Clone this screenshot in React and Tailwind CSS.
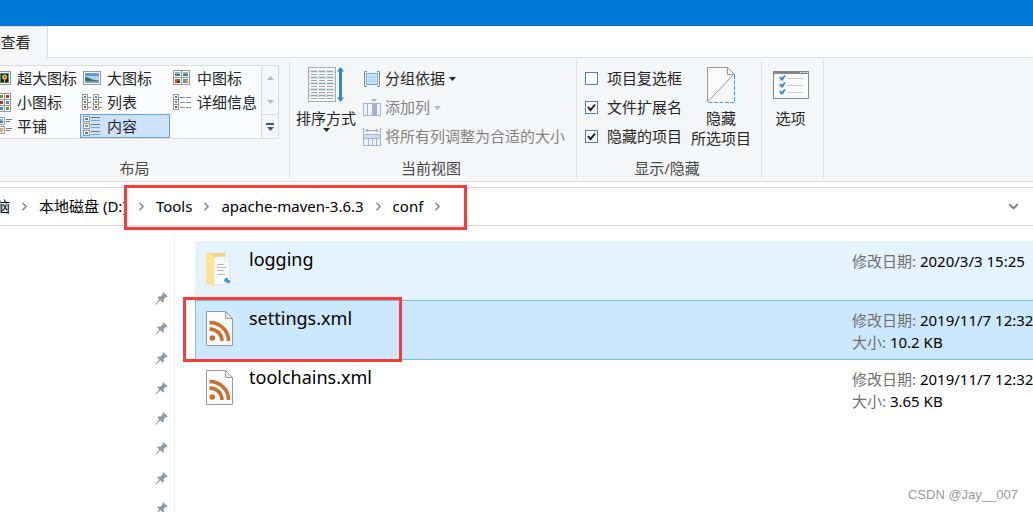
import { useState } from 'react';
import { ChevronDown, ChevronRight } from 'lucide-react';

function ExtraLargeIcon() {
  return (
    <svg width="20" height="20" viewBox="0 0 20 20">
      <rect x="3.5" y="3.5" width="15" height="13" fill="#fff" stroke="#969696" />
      <rect x="5" y="5" width="12" height="10" fill="#2f8fd0" />
      <rect x="5" y="11" width="12" height="4" fill="#3c8a4a" />
      <rect x="9" y="6" width="7" height="8" fill="#2b2416" />
      <circle cx="12.5" cy="9" r="2.5" fill="#f4c51c" />
      <circle cx="12.5" cy="9" r="1" fill="#b03a10" />
      <rect x="12" y="11" width="1" height="3" fill="#f4c51c" />
    </svg>
  );
}

function LargeIcon() {
  return (
    <svg width="20" height="20" viewBox="0 0 20 20">
      <rect x="1.5" y="3.5" width="17" height="13" fill="#fff" stroke="#969696" />
      <rect x="3" y="5" width="14" height="10" fill="#a9d2f5" />
      <rect x="3" y="5" width="14" height="3" fill="#5d9de0" />
      <path d="M3 9q4 0 7 2.500l7 1v2.500H3z" fill="#3f6b60" />
      <path d="M3 13h14v2H3z" fill="#7ea3b5" />
    </svg>
  );
}

function MediumIcon() {
  return (
    <svg width="20" height="20" viewBox="0 0 20 20">
      <g fill="#fff" stroke="#969696">
        <rect x="1.500" y="2.500" width="8" height="7" />
        <rect x="9.500" y="2.500" width="8" height="7" />
        <rect x="1.500" y="9.500" width="8" height="7" />
        <rect x="9.500" y="9.500" width="8" height="7" />
      </g>
      <path d="M3 4h5v2H3zM11 4h5v2h-5z" fill="#7db5ea" />
      <path d="M3 6h5v2H3zM11 6h5v2h-5z" fill="#4b7b72" />
      <path d="M3 11h5v4H3z" fill="#c8502a" />
      <path d="M5 13h3v2H5z" fill="#8c1d12" />
      <path d="M11 11h5v4h-5z" fill="#4f86c4" />
      <path d="M13 12h3v2h-3z" fill="#d8a52c" />
    </svg>
  );
}

function SmallIcon() {
  const colors = ['#4b86c8', '#6a8f3c', '#b8342a'];
  return (
    <svg width="20" height="20" viewBox="0 0 20 20">
      {[0, 1, 2].map((row) =>
        [0, 1, 2].map((col) => (
          <g key={`${row}-${col}`}>
            <rect x={0.5 + col * 6} y={1.5 + row * 6} width="6" height="6" fill="#fff" stroke="#969696" />
            <rect x={2 + col * 6} y={3 + row * 6} width="3" height="3" fill={colors[(row + col) % 3]} />
          </g>
        ))
      )}
    </svg>
  );
}

function ListIcon() {
  return (
    <svg width="20" height="20" viewBox="0 0 20 20">
      {[0, 11].map((x) => (
        <g key={x}>
          <rect x={x + 0.5} y="2.5" width="5" height="15" fill="#fff" stroke="#969696" />
          <path d={`M${x} 7.500h5M${x} 12.500h5`} stroke="#969696" />
          <rect x={x + 2} y="4" width="2" height="2" fill="#3c7fd0" />
          <rect x={x + 2} y="9" width="2" height="2" fill="#6a8f3c" />
          <rect x={x + 2} y="14" width="2" height="2" fill="#b8342a" />
          <path d={`M${x + 6} 5.500h3M${x + 6} 10.500h3M${x + 6} 15.500h3`} stroke="#8c8c8c" />
        </g>
      ))}
    </svg>
  );
}

function DetailsIcon() {
  return (
    <svg width="20" height="20" viewBox="0 0 20 20">
      <rect x="1.500" y="2.500" width="5" height="15" fill="#fff" stroke="#969696" />
      <path d="M1 7.500h5M1 12.500h5" stroke="#969696" />
      <rect x="3" y="4" width="2" height="2" fill="#3c7fd0" />
      <rect x="3" y="9" width="2" height="2" fill="#6a8f3c" />
      <rect x="3" y="14" width="2" height="2" fill="#b8342a" />
      <path d="M8 5.500h5M8 10.500h5M8 15.500h5M14 5.500h5M14 10.500h5M14 15.500h5" stroke="#8c8c8c" />
    </svg>
  );
}

function TilesIcon() {
  return (
    <svg width="20" height="20" viewBox="0 0 20 20">
      <rect x="4.500" y="1.500" width="8" height="7" fill="#fff" stroke="#969696" />
      <rect x="4.500" y="10.500" width="8" height="7" fill="#fff" stroke="#969696" />
      <path d="M6 3h5v2H6z" fill="#7db5ea" />
      <path d="M6 5h5v2H6z" fill="#4b7b9a" />
      <path d="M6 12h5v4H6z" fill="#a9a0d8" />
      <path d="M8 13h3v2H8z" fill="#d8c52c" />
      <path d="M14 3.500h6M14 5.500h4M14 12.500h6M14 14.500h4" stroke="#777" />
    </svg>
  );
}

function ContentIcon() {
  const colors = ['#3c7fd0', '#8c9a3c', '#3c7fd0'];
  return (
    <svg width="20" height="20" viewBox="0 0 20 20">
      {colors.map((color, i) => (
        <g key={i}>
          <rect x="1.500" y={0.5 + i * 7} width="6" height="5" fill="#fff" stroke="#969696" />
          <rect x="3" y={2 + i * 7} width="3" height="2" fill={color} />
          <path d={`M9 ${1.5 + i * 7}h9`} stroke="#777" />
          <path d={`M9 ${4.5 + i * 7}h9`} stroke="#6aa5ee" />
        </g>
      ))}
    </svg>
  );
}

function SortIcon() {
  return (
    <svg width="38" height="38" viewBox="0 0 38 38">
      <rect x="1.500" y="1.500" width="27" height="34" fill="#fdfdfd" stroke="#a8a8a8" />
      {[4, 10, 16, 22, 28].map((y) => (
        <rect key={y} x="2" y={y} width="26" height="3" fill="#cfe6ef" />
      ))}
      {[5, 8, 11, 14, 17, 20, 23, 26, 29, 32].map((y) => (
        <path key={y} d={`M4 ${y + 0.5}h6M12 ${y + 0.5}h6M20 ${y + 0.5}h6`} stroke="#aaa09c" />
      ))}
      <path d="M33.500 1l3.500 4.500h-2v26h2L33.500 36 30 31.500h2v-26h-2z" fill="#2b88d8" />
    </svg>
  );
}

function GroupByIcon() {
  return (
    <svg width="18" height="18" viewBox="0 0 18 18">
      <path d="M4 1.500H1.500v15H4M14 1.500h2.500v15H14" fill="none" stroke="#8a8a8a" />
      <rect x="3.500" y="3.500" width="11" height="11" fill="#b4dcff" stroke="#62a9dc" />
      <rect x="4.500" y="4.500" width="9" height="9" fill="none" stroke="#d6edff" />
    </svg>
  );
}

function AddColumnIcon() {
  return (
    <svg width="18" height="18" viewBox="0 0 18 18">
      <rect x=".5" y="4.500" width="17" height="12" fill="#eef2fb" stroke="#a4b2d0" />
      <path d="M4.500 5v11M13.500 5v11" stroke="#a4b2d0" />
      <rect x="9" y="5" width="4" height="11" fill="#a4b2d0" />
      <path d="M8 0h6l-3 3z" fill="#a4b2d0" />
    </svg>
  );
}

function FitColumnsIcon() {
  return (
    <svg width="18" height="18" viewBox="0 0 18 18">
      <path d="M.5 0v5M17.500 0v5M3 2.500h12M5 .5l-2 2 2 2M13 .5l2 2-2 2" fill="none" stroke="#8f9fc2" />
      <rect x=".5" y="6.500" width="17" height="11" fill="#eef2fb" stroke="#a4b2d0" />
      <rect x="1" y="7" width="16" height="3" fill="#d0daee" />
      <path d="M1 10.500h16M5.500 11v6M9.500 11v6M13.500 11v6" stroke="#a4b2d0" />
    </svg>
  );
}

function HideIcon() {
  return (
    <svg width="30" height="38" viewBox="0 0 30 38">
      <path d="M1 36V1.500h20l7 7z" fill="#fafafa" />
      <path d="M1.500 36V1.500h20l6 7L1.500 36" fill="none" stroke="#969696" />
      <path d="M21.500 1.500v7h7z" fill="#fff" stroke="#969696" />
      <path d="M28.500 9v27.500H2" fill="none" stroke="#3c9be8" strokeDasharray="4 1.500" />
    </svg>
  );
}

function OptionsIcon() {
  return (
    <svg width="36" height="38" viewBox="0 0 36 38">
      <rect x=".5" y="5.500" width="35" height="27" fill="#fafafa" stroke="#858789" />
      <rect x="0" y="5" width="36" height="3" fill="#858789" />
      <path d="M27 6.500h2M30 6.500h2M33 6.500h2" stroke="#ddd" />
      {[10, 17, 24].map((y) => (
        <g key={y}>
          <rect x="6" y={y} width="5" height="5" fill="#e2e2e2" />
          <path d={`M7 ${y + 1.5}l2 2 3-4`} fill="none" stroke="#2b88d8" strokeWidth="1.800" />
          <path d={`M14 ${y + 2.5}h16`} stroke="#cfcfcf" />
        </g>
      ))}
    </svg>
  );
}

function PinIcon() {
  return (
    <svg width="13" height="13" viewBox="0 0 13 13" fill="#8e9aa3">
      <path d="M8.300.3l4.200 4-.6.9-1.300-.1-2 2.100.3 2.300-.9 1.200-2.600-2.400L1 12.700l-.7-.5 4-4.700L2.200 5.300l1-.9 2.500.1L7.700 2.300l-.2-1.200z" />
    </svg>
  );
}

function FolderIcon() {
  return (
    <svg width="30" height="36" viewBox="0 0 30 36">
      <path d="M3 1h17v31H3z" fill="#f4d37a" />
      <path d="M9 5l11-1 5 5v23l-16 1z" fill="#f8fafb" stroke="#d3d9dc" strokeWidth=".7" />
      <path d="M20 4v5h5" fill="#fff" stroke="#cdd3d6" strokeWidth=".7" />
      <path d="M12 12.500h7M12 15.500h9M12 18.500h7M12 22.500h8" stroke="#b3b9bc" />
      <path d="M1 1l8 3v31l-8-4z" fill="#ffe394" />
      <path d="M20 26h3v2h2v3h-3l-3-2z" fill="#3d9ad8" />
    </svg>
  );
}

function XmlIcon() {
  return (
    <svg width="30" height="36" viewBox="0 0 30 36">
      <path d="M1.500.5h19l7 7v27h-26z" fill="#f9fafb" stroke="#999" />
      <path d="M20.500.5v7h7z" fill="#e6e8ea" stroke="#999" />
      <g fill="none" stroke="#cf6b2c" strokeWidth="3.500">
        <path d="M4.500 11.500c10.500 0 19 8 19 18.500" />
        <path d="M4.500 18c7 0 12.500 5 12.500 12" />
      </g>
      <circle cx="7.300" cy="27" r="2.800" fill="#cf6b2c" />
    </svg>
  );
}

function Caret({ className }) {
  return (
    <svg width="7" height="4" viewBox="0 0 7 4" className={className} fill="currentColor">
      <path d="M0 0h7L3.500 4z" />
    </svg>
  );
}

const layouts = [
  { name: '超大图标', icon: ExtraLargeIcon },
  { name: '大图标', icon: LargeIcon },
  { name: '中图标', icon: MediumIcon },
  { name: '小图标', icon: SmallIcon },
  { name: '列表', icon: ListIcon },
  { name: '详细信息', icon: DetailsIcon },
  { name: '平铺', icon: TilesIcon },
  { name: '内容', icon: ContentIcon },
];

const files = [
  { name: 'logging', icon: FolderIcon, date: '2020/3/3 15:25' },
  { name: 'settings.xml', icon: XmlIcon, date: '2019/11/7 12:32', size: '10.2 KB' },
  { name: 'toolchains.xml', icon: XmlIcon, date: '2019/11/7 12:32', size: '3.65 KB' },
];

function Group({ label, className = '', children }) {
  return (
    <section className={`flex flex-col justify-between h-[118px] border-r border-[#dfe1e3] shrink-0 ${className}`}>
      <div className="flex">{children}</div>
      {label && <h2 className="text-center text-[#4a4a4a] leading-5">{label}</h2>}
    </section>
  );
}

function LayoutGallery() {
  const [active, setActive] = useState('内容');

  return (
    <div className="flex mt-[5px]">
      <div className="grid grid-cols-[90px_90px_90px] auto-rows-[24px] pr-px bg-[#fbfcfd] border-y border-[#dadbdc]">
        {layouts.map(({ name, icon: Icon }) => (
          <button
            key={name}
            onClick={() => setActive(name)}
            className={`flex items-center gap-[5px] pl-px border whitespace-nowrap ${
              active === name ? 'bg-[#cde3fb] border-[#62a2e4]' : 'border-transparent'
            }`}
          >
            <Icon />
            <span>{name}</span>
          </button>
        ))}
      </div>
      <div className="flex flex-col w-[18px] border border-[#dadbdc] text-[#b4b9c2]">
        <button aria-label="向上" className="flex items-center justify-center h-6">
          <Caret className="rotate-180" />
        </button>
        <button aria-label="向下" className="flex items-center justify-center h-6">
          <Caret />
        </button>
        <button
          aria-label="更多"
          className="flex flex-col items-center justify-center gap-0.5 h-6 border-t border-[#dadbdc] text-[#46566e]"
        >
          <span className="w-2 h-0.5 bg-[#46566e]" />
          <Caret />
        </button>
      </div>
    </div>
  );
}

function Toggle({ label, defaultChecked }) {
  return (
    <label className="flex items-center gap-[9px] h-[29px] whitespace-nowrap">
      <span className="grid">
        <input
          type="checkbox"
          defaultChecked={defaultChecked}
          className="peer appearance-none col-start-1 row-start-1 w-[13px] h-[13px] bg-white border border-[#5a7aa8]"
        />
        <svg
          width="13"
          height="13"
          viewBox="0 0 13 13"
          className="invisible peer-checked:visible col-start-1 row-start-1 pointer-events-none"
        >
          <path d="M3 6l2.500 3.200L10 3.500" fill="none" stroke="#1e1e1e" strokeWidth="2" />
        </svg>
      </span>
      {label}
    </label>
  );
}

function Ribbon() {
  return (
    <div className="flex pt-0.5 h-[124px] bg-[#f5f6f7] border-b border-[#dadbdc] text-[#262626] shrink-0">
      <Group label="布局" className="-ml-[10px] pr-[10px]">
        <LayoutGallery />
      </Group>

      <Group label="当前视图" className="w-[287px] pr-1">
        <button className="flex flex-col items-center w-[72px] pt-1.5">
          <SortIcon />
          <span className="mt-1 leading-5">排序方式</span>
          <Caret />
        </button>
        <div className="flex flex-col items-start pt-1 pl-px whitespace-nowrap">
          <button className="flex items-center gap-1 h-[29px]">
            <GroupByIcon />
            分组依据
            <Caret />
          </button>
          <button disabled className="flex items-center gap-1 h-[29px] text-[#838383]">
            <AddColumnIcon />
            添加列
            <Caret className="text-[#b4b4b4]" />
          </button>
          <button disabled className="flex items-center gap-1 h-[29px] text-[#838383]">
            <FitColumnsIcon />
            将所有列调整为合适的大小
          </button>
        </div>
      </Group>

      <Group label="显示/隐藏" className="w-[185px] pr-1">
        <div className="pt-1 pl-2">
          <Toggle label="项目复选框" />
          <Toggle label="文件扩展名" defaultChecked />
          <Toggle label="隐藏的项目" defaultChecked />
        </div>
        <button className="flex flex-col items-center pt-1.5 pl-[9px] leading-5 whitespace-nowrap">
          <HideIcon />
          <span className="mt-1">隐藏</span>
          <span>所选项目</span>
        </button>
      </Group>

      <Group className="w-[62px]">
        <button className="flex flex-col items-center w-full pt-1.5 pr-1 leading-5">
          <OptionsIcon />
          <span className="mt-1">选项</span>
        </button>
      </Group>
    </div>
  );
}

function Separator() {
  return <ChevronRight size={13} strokeWidth={3} className="text-[#8a8a8a] shrink-0" />;
}

function AddressBar() {
  return (
    <nav className="relative flex items-center mt-[5px] h-[39px] border-y border-[#d9d9d9] text-black whitespace-nowrap shrink-0">
      <div className="flex items-center gap-2 -ml-[5px]">
        <a href="#pc">脑</a>
        <Separator />
        <a href="#d">本地磁盘 (D:)</a>
        <Separator />
        <a href="#tools">Tools</a>
        <Separator />
        <a href="#maven">apache-maven-3.6.3</a>
        <Separator />
        <a href="#conf">conf</a>
        <Separator />
      </div>
      <button aria-label="以前的位置" className="ml-auto mr-3 text-[#7a7a7a]">
        <ChevronDown size={15} strokeWidth={3} />
      </button>
      <span className="absolute -top-[3px] left-[124px] w-[343px] h-[45px] border-[3px] border-[#fb3a3a] pointer-events-none" />
    </nav>
  );
}

function FileRow({ file, selected, onSelect }) {
  const Icon = file.icon;
  let color = 'border-transparent';
  if (selected) color = 'bg-[#cce8ff] border-[#7fbcec]';
  else if (file.name === 'logging') color = 'bg-[#e5f3ff] border-[#e5f3ff]';

  return (
    <li className="relative -mb-px">
      <button onClick={onSelect} className={`flex items-start w-full h-[60px] pl-[9px] text-left border border-r-0 ${color}`}>
        <span className="w-11 pt-[10px] shrink-0">
          <Icon />
        </span>
        <span className="grow pt-[3px] text-[18px] leading-7">{file.name}</span>
        <span className="w-[181px] pt-2 shrink-0 leading-[22px] whitespace-nowrap">
          <span className="block">
            <span className="text-[#707070]">修改日期:</span> {file.date}
          </span>
          {file.size && (
            <span className="block">
              <span className="text-[#707070]">大小:</span> {file.size}
            </span>
          )}
        </span>
      </button>
      {file.name === 'settings.xml' && (
        <span className="absolute -top-[3px] -left-3 w-[219px] h-[65px] border-[3px] border-[#fb3a3a] pointer-events-none" />
      )}
    </li>
  );
}

export default function App() {
  const [selected, setSelected] = useState('settings.xml');

  return (
    <div className="relative flex flex-col h-screen overflow-hidden bg-white text-black text-[15px] font-['Noto_Sans','Noto_Sans_CJK_SC',sans-serif]">
      <header className="h-[26px] bg-[#0078d7] shrink-0" />
      <div className="flex h-8 shrink-0">
        <button className="w-12 pr-4 bg-[#f5f6f7] border-t border-r border-[#dadbdc] text-[#262626] whitespace-nowrap">查看</button>
        <div className="grow border-b border-[#dadbdc]" />
      </div>
      <Ribbon />
      <AddressBar />

      <div className="flex grow min-h-0">
        <aside className="flex flex-col items-end w-[175px] mt-[7px] pt-[50px] pr-1.5 border-r border-[#f0f0f0] shrink-0 overflow-hidden">
          {[1, 2, 3, 4, 5, 6, 7, 8].map((n) => (
            <span key={n} className="flex items-center h-[30px] shrink-0">
              <PinIcon />
            </span>
          ))}
        </aside>
        <ul className="grow pt-[15px] pl-5">
          {files.map((file) => (
            <FileRow
              key={file.name}
              file={file}
              selected={selected === file.name}
              onSelect={() => setSelected(file.name)}
            />
          ))}
        </ul>
      </div>

      <span className="absolute right-[15px] bottom-2 text-[13px] leading-[18px] text-[#999] font-['Liberation_Sans',sans-serif]">
        CSDN @Jay__007
      </span>
    </div>
  );
}
